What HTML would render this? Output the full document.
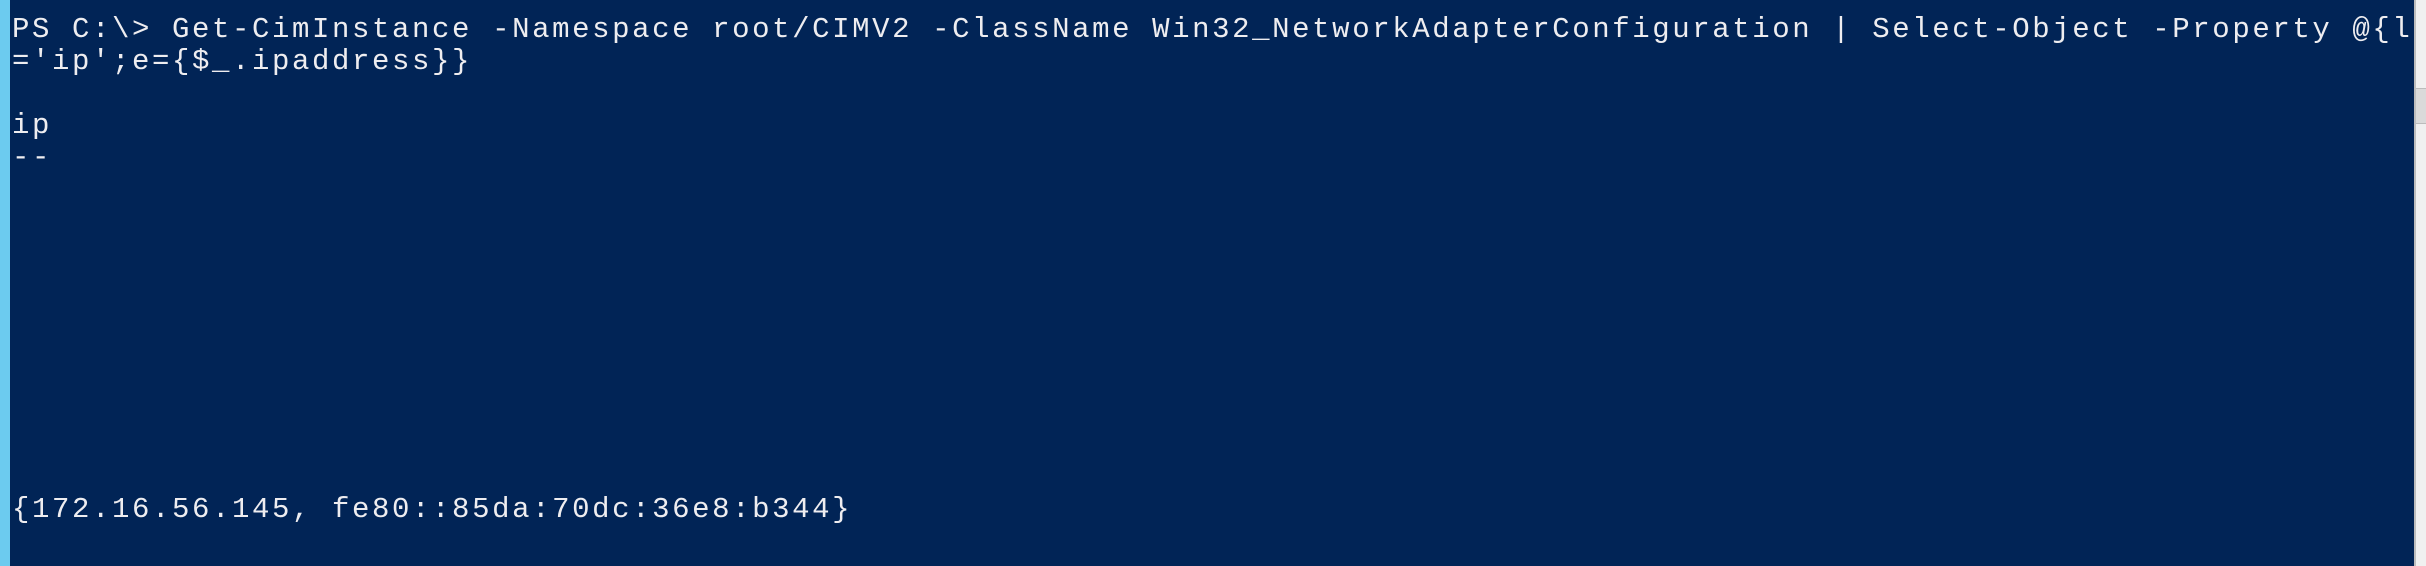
<!DOCTYPE html>
<html><head><style>
body{margin:0;width:2426px;height:566px;overflow:hidden;background:#012456;position:relative}
.bar{position:absolute;left:0;top:0;width:10px;height:566px;background:#6ccbef}
.sb{position:absolute;left:2414px;top:0;width:12px;height:566px;background:#f0f0f0;border-left:2px solid #bdbdbd;box-sizing:border-box}
.th{position:absolute;left:2416px;top:88px;width:10px;height:34px;background:#dadada;border-top:1px solid #bcbcbc;border-bottom:1px solid #bcbcbc}
pre{position:absolute;left:12px;top:14px;margin:0;font-family:"Liberation Mono",monospace;font-size:29px;letter-spacing:2.6px;line-height:32px;color:#eeedf0}
</style></head><body>
<div class="bar"></div>
<pre>PS C:\&gt; Get-CimInstance -Namespace root/CIMV2 -ClassName Win32_NetworkAdapterConfiguration | Select-Object -Property @{l
='ip';e={$_.ipaddress}}

ip
--










{172.16.56.145, fe80::85da:70dc:36e8:b344}</pre>
<div class="sb"></div><div class="th"></div>
</body></html>
